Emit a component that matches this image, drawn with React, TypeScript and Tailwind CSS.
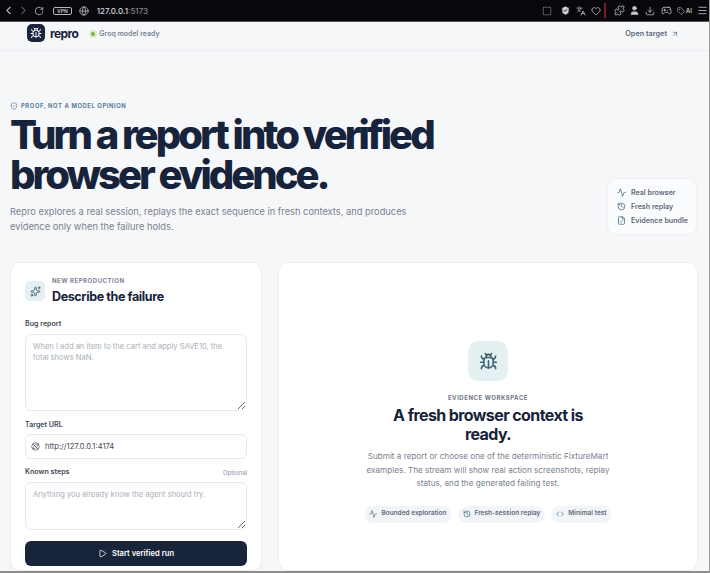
import React from "react";
import {
  Activity, ArrowUpRight, Bug, ChevronLeft, ChevronRight, Code, Download, Globe, Heart, History, Languages,
  Menu, FileCheck, Play, RotateCw, ShieldCheck, Sparkles, SquareDashed, User, Puzzle, Gamepad2, Tag,
} from "lucide-react";

function Chrome() {
  return (
    <div className="h-[22px] shrink-0 bg-[#08080c] flex items-center text-[#b5b5ba] border-b border-[#55555a]">
      <ChevronLeft size={13} className="ml-[2px]" />
      <ChevronRight size={13} className="ml-[2px] text-[#55555a]" />
      <RotateCw size={10} className="ml-[4px]" />
      <span className="ml-[9px] border border-[#b5b5ba] rounded-[2px] px-[3px] text-[5px] leading-[6px] font-bold">VPN</span>
      <Globe size={10} className="ml-[7px]" />
      <span className="ml-[8px] text-[8px] font-medium text-[#d8d8dc]">127.0.0.1<span className="text-[#88888e]">:5173</span></span>
      <div className="ml-auto flex items-center pr-[1px]">
        <SquareDashed size={10} />
        <ShieldCheck size={11} fill="#d0d0d4" stroke="#08080c" className="ml-[8px]" />
        <Languages size={10} className="ml-[5px]" />
        <Heart size={10} className="ml-[5px]" />
        <span className="w-[2px] h-[15px] bg-[#7a1a2e] ml-[3px]" />
        <Puzzle size={11} className="ml-[8px]" />
        <User size={11} fill="#d0d0d4" className="ml-[4px]" />
        <Download size={10} className="ml-[5px]" />
        <Gamepad2 size={11} className="ml-[6px]" />
        <span className="ml-[5px] flex items-center gap-[1px] text-[6px] font-bold"><Tag size={8} />AI</span>
        <Menu size={11} className="ml-[5px]" />
      </div>
    </div>
  );
}

function Header() {
  return (
    <header className="h-[29px] shrink-0 border-b border-[#eceef1] flex items-center px-[27px] pb-[4px]">
      <span className="w-[18px] h-[18px] -mt-[2px] rounded-[5px] bg-[#17243a] flex items-center justify-center text-white">
        <Bug size={12} />
      </span>
      <span className="ml-[5px] text-[12px] font-bold tracking-[-0.05em] text-[#16233a]">repro</span>
      <span className="ml-[13px] w-[4px] h-[4px] rounded-full bg-[#7fb23f] ring-2 ring-[#dfecd0]" />
      <span className="ml-[4px] text-[7px] font-semibold text-[#7b8391]">Groq model ready</span>
      <span className="ml-auto mr-[3px] flex items-center gap-[4px] text-[7.3px] font-semibold text-[#5d6675]">
        Open target <ArrowUpRight size={8} />
      </span>
    </header>
  );
}

function Hero() {
  return (
    <section className="flex items-end justify-between pt-[50px] pl-[10px] pr-[12px]">
      <div>
        <div className="flex items-center gap-[3px] text-[#5b7a9c]">
          <ShieldCheck size={8} />
          <span className="text-[5.85px] leading-[10px] font-bold tracking-[0.1em]">PROOF, NOT A MODEL OPINION</span>
        </div>
        <h1 className="mt-[4px] text-[40px] leading-[40px] font-extrabold tracking-[-0.075em] text-[#16233a]">
          Turn a report into verified<br />browser evidence.
        </h1>
        <p className="mt-[9px] text-[9.3px] leading-[15px] text-[#7a8290] w-[420px]">
          Repro explores a real session, replays the exact sequence in fresh contexts, and produces evidence only when the failure holds.
        </p>
      </div>
      <div className="w-[90px] h-[57px] mb-[-1px] rounded-[9px] bg-[#fafbfc] border border-[#eef0f3] flex flex-col justify-center gap-[3px] pl-[9px] text-[7.1px] leading-[11px] font-semibold text-[#5f6878]">
        <div className="flex items-center gap-[5px]"><Activity size={9} className="text-[#3e6a78]" />Real browser</div>
        <div className="flex items-center gap-[5px]"><History size={9} className="text-[#3e6a78]" />Fresh replay</div>
        <div className="flex items-center gap-[5px]"><FileCheck size={9} className="text-[#3e6a78]" />Evidence bundle</div>
      </div>
    </section>
  );
}

function FormCard() {
  return (
    <div className="rounded-[10px] bg-white border border-[#eceef1] px-[14px] pt-[13px]">
      <div className="flex gap-[7px]">
        <span className="mt-[5px] w-[20px] h-[20px] rounded-[5px] bg-[#e3eff3] flex items-center justify-center text-[#3a5f6e]">
          <Sparkles size={11} />
        </span>
        <div>
          <div className="text-[6px] leading-[10px] font-bold tracking-[0.09em] text-[#7b8391]">NEW REPRODUCTION</div>
          <div className="mt-[2px] text-[12.5px] leading-[18px] font-bold tracking-[-0.03em] text-[#16233a]">Describe the failure</div>
        </div>
      </div>
      <div className="mt-[12px] text-[7.1px] leading-[12px] font-semibold text-[#3f4856]">Bug report</div>
      <textarea
        readOnly
        className="mt-[4px] block w-full h-[77px] rounded-[6px] border border-[#e7e9ed] px-[7px] py-[6px] text-[7.55px] leading-[11px] outline-none placeholder:text-[#a9afb9]"
        placeholder="When I add an item to the cart and apply SAVE10, the total shows NaN."
      />
      <div className="mt-[8px] text-[7.1px] leading-[12px] font-semibold text-[#3f4856]">Target URL</div>
      <div className="mt-[3px] h-[25px] rounded-[6px] border border-[#e7e9ed] flex items-center pl-[5px] gap-[5px] text-[7.6px] text-[#3f4856]">
        <Globe size={9} className="text-[#5f6878] rotate-45" />
        http://127.0.0.1:4174
      </div>
      <div className="mt-[7px] flex items-center justify-between">
        <span className="text-[7.1px] leading-[12px] font-semibold text-[#3f4856]">Known steps</span>
        <span className="text-[6px] font-medium text-[#9aa1ac]">Optional</span>
      </div>
      <textarea
        readOnly
        className="mt-[4px] block w-full h-[48px] rounded-[6px] border border-[#e7e9ed] px-[7px] py-[6px] text-[7.55px] leading-[11px] outline-none placeholder:text-[#a9afb9]"
        placeholder="Anything you already know the agent should try."
      />
      <div className="mt-[11px] h-[25px] rounded-[6px] bg-[#17243a] text-white flex items-center justify-center gap-[5px] text-[7.6px] font-semibold">
        <Play size={9} />
        Start verified run
      </div>
    </div>
  );
}

function Chip({ icon, label }: { icon: React.ReactNode; label: string }) {
  return (
    <span className="h-[17px] rounded-full bg-[#f2f5f8] px-[5px] flex items-center gap-[4px] text-[6.5px] font-semibold text-[#626b7a] whitespace-nowrap">
      {icon}
      {label}
    </span>
  );
}

function Workspace() {
  return (
    <div className="rounded-[10px] bg-white border border-[#eceef1] flex flex-col items-center pt-[78px]">
      <span className="w-[40px] h-[40px] rounded-[10px] bg-[#e5f0f3] flex items-center justify-center text-[#3f6472]">
        <Bug size={19} />
      </span>
      <div className="mt-[12px] text-[6px] leading-[10px] font-bold tracking-[0.09em] text-[#6e7786]">EVIDENCE WORKSPACE</div>
      <h2 className="mt-[3px] w-[210px] text-center text-[16px] leading-[19px] font-bold tracking-[-0.037em] text-[#16233a]">
        A fresh browser context is ready.
      </h2>
      <p className="mt-[6px] w-[260px] text-center text-[8.16px] leading-[13.5px] text-[#7a8290]">
        Submit a report or choose one of the deterministic FixtureMart examples. The stream will show real action screenshots, replay status, and the generated failing test.
      </p>
      <div className="mt-[15px] flex gap-[6px]">
        <Chip icon={<Activity size={8} className="text-[#3e6a78]" />} label="Bounded exploration" />
        <Chip icon={<History size={8} className="text-[#3e6a78]" />} label="Fresh-session replay" />
        <Chip icon={<Code size={8} className="text-[#3e6a78]" />} label="Minimal test" />
      </div>
    </div>
  );
}

export default function App() {
  return (
    <div className="h-[573px] overflow-hidden flex flex-col bg-[#f6f7f9] border-r border-[#9a9a9a] font-['Inter',sans-serif]">
      <Chrome />
      <Header />
      <Hero />
      <main className="mt-[28px] flex-1 min-h-0 pl-[10px] pr-[11px] grid grid-cols-[252px_1fr] gap-[16px]">
        <FormCard />
        <Workspace />
      </main>
      <div className="h-[2px] shrink-0 bg-[#8c8c8c]" />
    </div>
  );
}
